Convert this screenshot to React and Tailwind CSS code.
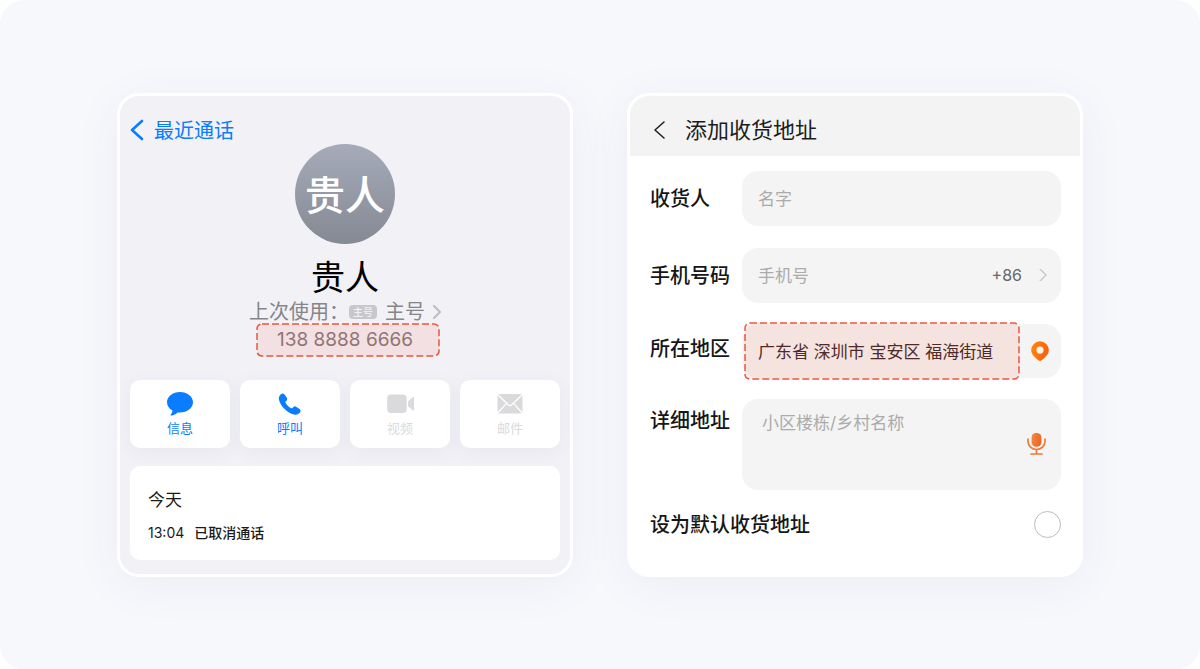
import React from "react";

function Chevron({ className, points, strokeWidth, viewBox }) {
  return (
    <svg
      className={className}
      viewBox={viewBox}
      fill="none"
      stroke="currentColor"
      strokeWidth={strokeWidth}
      strokeLinecap="round"
      strokeLinejoin="round"
      aria-hidden="true"
    >
      <polyline points={points} />
    </svg>
  );
}

function DashedFrame() {
  return (
    <svg className="pointer-events-none absolute inset-0 h-full w-full overflow-visible" aria-hidden="true">
      <rect
        width="100%"
        height="100%"
        rx="5"
        fill="#ff4b32"
        fillOpacity="0.1"
        stroke="#e8573f"
        strokeWidth="1.5"
        strokeDasharray="7 3"
      />
    </svg>
  );
}

function MessageIcon() {
  return (
    <svg className="h-6 w-7" viewBox="0 0 28 24" fill="currentColor" aria-hidden="true">
      <path d="M14 0C6.800 0 1 4.500 1 10.300c0 3.500 2.100 6.500 5.400 8.300.1 1.400-.6 2.700-1.700 3.900-.5.600-.1 1.200.6 1.100 2.600-.4 4.700-1.500 6.200-3.200.8.100 1.700.2 2.500.2 7.200 0 13-4.500 13-10.300S21.200 0 14 0z" />
    </svg>
  );
}

function PhoneIcon() {
  return (
    <svg className="h-6 w-7" viewBox="0 0 28 24" fill="currentColor" aria-hidden="true">
      <path d="M4.700 2.400C5.900 1.200 7.500 1.200 8.500 2.500l2.200 3.100c.8 1.200.7 2.300-.3 3.300l-.7.700c-.4.400-.4.800-.1 1.300 1.300 2.100 3.300 4 5.500 5.300.5.300.9.200 1.300-.2l.8-.8c1-1 2.100-1.100 3.300-.3l3 2.100c1.300.9 1.500 2.400.3 3.700-1.500 1.700-3.500 2.300-5.800 1.800C11.300 21.100 4.100 14 2.900 7.300c-.3-1.900.4-3.600 1.800-4.900z" />
    </svg>
  );
}

function VideoIcon() {
  return (
    <svg className="h-6 w-7" viewBox="0 0 28 24" fill="currentColor" aria-hidden="true">
      <rect x="1.200" y="2.500" width="19.500" height="18.500" rx="4" />
      <path d="M22 9.300l4.800-4.100c.9-.7 2-.4 2 .8v11.500c0 1.200-1.100 1.500-2 .8L22 14.200z" />
    </svg>
  );
}

function MailIcon() {
  return (
    <svg className="h-6 w-7" viewBox="0 0 28 24" aria-hidden="true">
      <rect x="1.500" y="2" width="25" height="19.500" rx="1.500" fill="currentColor" />
      <path
        d="M1.500 2.500l10.700 10.300c1.100 1 2.500 1 3.600 0L26.500 2.500M1.500 21.200l9-9.800M26.500 21.200l-9-9.800"
        fill="none"
        stroke="#fff"
        strokeWidth="1.300"
      />
    </svg>
  );
}

function PinIcon() {
  return (
    <svg className="h-5 w-[18px]" viewBox="0 0 18 20" aria-hidden="true">
      <defs>
        <linearGradient id="pin" x1="0" y1="0" x2="1" y2="0.300">
          <stop offset="0" stopColor="#ff8a0c" />
          <stop offset="1" stopColor="#ff5f05" />
        </linearGradient>
      </defs>
      <path
        fill="url(#pin)"
        fillRule="evenodd"
        d="M9 .3A8.800 8.800 0 0 0 .2 9.100c0 3.400 1.700 5.400 4.300 7.700l2.800 2.400c1.100.9 2.300.9 3.400 0l2.800-2.400c2.600-2.300 4.300-4.300 4.300-7.700A8.800 8.800 0 0 0 9 .3zm0 5.200a3.600 3.600 0 1 1 0 7.200 3.600 3.600 0 0 1 0-7.200z"
      />
    </svg>
  );
}

function MicIcon() {
  return (
    <svg className="h-[22px] w-[19px]" viewBox="0 0 19 22" aria-hidden="true">
      <defs>
        <linearGradient id="mic" x1="0" y1="0" x2="1" y2="0.300">
          <stop offset="0" stopColor="#f58a3c" />
          <stop offset="1" stopColor="#e9682a" />
        </linearGradient>
      </defs>
      <rect x="4.600" y="0" width="9.800" height="13.800" rx="4.600" fill="url(#mic)" />
      <path
        d="M1 6.200v2.300a8.500 8 0 0 0 17 0V6.200M9.500 17v4M4 21h11"
        fill="none"
        stroke="#ee7a35"
        strokeWidth="1.700"
        strokeLinecap="round"
      />
    </svg>
  );
}

const actions = [
  { label: "信息", Icon: MessageIcon, enabled: true },
  { label: "呼叫", Icon: PhoneIcon, enabled: true },
  { label: "视频", Icon: VideoIcon, enabled: false },
  { label: "邮件", Icon: MailIcon, enabled: false },
];

function ContactCard() {
  return (
    <section className="flex flex-col rounded-[22px] border-[3px] border-white bg-[#f1f1f6] px-2.5 pb-3.5 shadow-[0_8px_48px_rgba(60,70,110,0.06)]">
      <a href="#recents" className="mt-5 flex h-7 items-center gap-2.5 self-start text-[20px] text-[#0a7cff]">
        <Chevron className="h-[22px] w-3.5" viewBox="0 0 14 22" points="12,2 2,11 12,20" strokeWidth="2.600" />
        <span className="pt-0.5">最近通话</span>
      </a>
      <div className="flex flex-col items-center">
        <div className="flex size-[100px] items-center justify-center rounded-full bg-linear-to-b from-[#a5abb9] to-[#858993] pt-1 text-[40px] leading-none font-medium text-white">
          贵人
        </div>
        <h1 className="mt-3.5 text-[34px] leading-10 text-black">贵人</h1>
        <p className="mt-0.5 flex h-6 items-center text-[20px] text-[#85858a]">
          <span>上次使用：</span>
          <span className="mr-2 rounded-[4px] bg-[#c8c8cc] px-1 text-[10px] leading-[14px] font-medium text-[#f1f1f6]">主号</span>
          <span>主号</span>
          <Chevron className="ml-2 h-3.5 w-2 text-[#bdbdc1]" viewBox="0 0 8 14" points="1,1 7,7 1,13" strokeWidth="2" />
        </p>
        <p className="relative ml-1.5 h-8 w-[182px] text-center text-[19px] leading-8 text-[#85797d]">
          <span className="mr-1.5">138 8888 6666</span>
          <DashedFrame />
        </p>
      </div>
      <div className="mt-6 grid grid-cols-4 gap-2.5">
        {actions.map(({ label, Icon, enabled }) => (
          <button
            key={label}
            type="button"
            disabled={!enabled}
            className="flex h-[68px] flex-col items-center gap-[3px] rounded-[10px] bg-white pt-3 text-[13px] leading-[18px] text-[#0a7cff] shadow-[0_4px_20px_rgba(60,60,110,0.05)] disabled:text-[#dadadc]"
          >
            <Icon />
            {label}
          </button>
        ))}
      </div>
      <div className="mt-[18px] flex h-[94px] flex-col justify-center gap-[11px] rounded-[10px] bg-white px-[18px] pt-1.5 text-[#1a1a1a]">
        <h2 className="text-[17px] leading-6">今天</h2>
        <p className="flex gap-2.5 text-[14px] leading-5">
          <time>13:04</time>
          <strong className="font-medium">已取消通话</strong>
        </p>
      </div>
    </section>
  );
}

const labelClass = "w-[92px] shrink-0 text-[20px] leading-7 font-medium text-[#161616]";
const fieldClass = "flex min-w-0 flex-1 items-center rounded-[16px] bg-[#f4f4f4]";

function AddressCard() {
  return (
    <section className="flex flex-col overflow-hidden rounded-[22px] border-[3px] border-white bg-white shadow-[0_8px_48px_rgba(60,70,110,0.06)]">
      <header className="flex h-[60px] items-center gap-5 bg-[#f3f3f3] pt-2 pl-[23px] text-[#1c1c1c]">
        <button type="button" aria-label="返回">
          <Chevron className="h-[18px] w-3" viewBox="0 0 12 18" points="11,1 2,9 11,17" strokeWidth="1.500" />
        </button>
        <h1 className="text-[22px] leading-8">添加收货地址</h1>
      </header>
      <form className="flex flex-col pt-[15px] pr-[19px] pl-5" onSubmit={(e) => e.preventDefault()}>
        <div className="flex items-center">
          <label htmlFor="name" className={labelClass + " pt-0.5"}>收货人</label>
          <div className={fieldClass}>
            <input id="name" placeholder="名字" className="h-[55px] w-full px-4 pt-0.5 text-[17px] outline-none placeholder:text-[#ababab]" />
          </div>
        </div>
        <div className="mt-[22px] flex items-center">
          <label htmlFor="phone" className={labelClass + " pt-0.5"}>手机号码</label>
          <div className={fieldClass}>
            <input id="phone" type="tel" placeholder="手机号" className="h-[55px] min-w-0 flex-1 pt-0.5 pl-4 text-[17px] outline-none placeholder:text-[#ababab]" />
            <button type="button" className="flex items-center gap-[17px] pr-3.5 text-[16px] text-[#666]">
              +86
              <Chevron className="h-3 w-2 text-[#c6c6c6]" viewBox="0 0 8 12" points="1,0 7,6 1,12" strokeWidth="1.300" />
            </button>
          </div>
        </div>
        <div className="mt-[21px] flex items-center">
          <label htmlFor="region" className={labelClass + " pb-1"}>所在地区</label>
          <div className={fieldClass}>
            <div className="relative ml-[3px] min-w-0 flex-1">
              <input id="region" defaultValue="广东省 深圳市 宝安区 福海街道" className="h-[54px] w-full pl-[13px] text-[17px] text-[#3a2727] outline-none" />
              <div className="pointer-events-none absolute -inset-y-px inset-x-0">
                <DashedFrame />
              </div>
            </div>
            <button type="button" aria-label="定位" className="pr-3 pl-3">
              <PinIcon />
            </button>
          </div>
        </div>
        <div className="mt-[21px] flex">
          <label htmlFor="detail" className={labelClass + " pt-2"}>详细地址</label>
          <div className={fieldClass}>
            <textarea id="detail" placeholder="小区楼栋/乡村名称" className="h-[91px] min-w-0 flex-1 resize-none pt-2.5 pl-5 text-[17px] leading-7 outline-none placeholder:text-[#ababab]" />
            <button type="button" aria-label="语音输入" className="pr-[15px]">
              <MicIcon />
            </button>
          </div>
        </div>
        <div className="mt-[21px] flex items-center justify-between">
          <label htmlFor="default" className="text-[20px] leading-7 font-medium text-[#161616]">设为默认收货地址</label>
          <input id="default" type="checkbox" className="size-[27px] appearance-none rounded-full border border-[#bcbcbc] bg-white checked:bg-[#ff6a05]" />
        </div>
      </form>
    </section>
  );
}

export default function App() {
  return (
    <main className="min-h-screen bg-white font-['Inter','Noto_Sans_CJK_SC',sans-serif]">
      <div className="flex min-h-screen items-center justify-center rounded-[24px] bg-[#f7f8fc]">
        <div className="grid w-full max-w-[966px] grid-cols-1 gap-[54px] md:grid-cols-2">
          <ContactCard />
          <AddressCard />
        </div>
      </div>
    </main>
  );
}
